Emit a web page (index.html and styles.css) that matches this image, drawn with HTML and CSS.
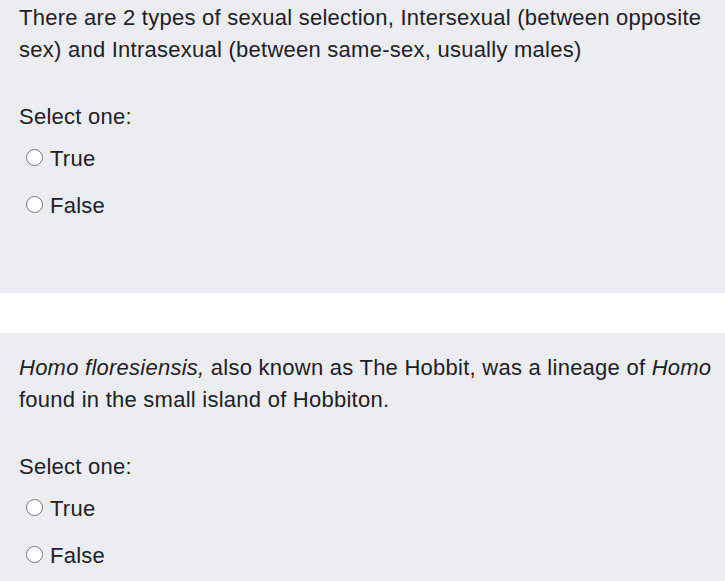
FILE: index.html
```html
<!DOCTYPE html>
<html lang="en">
<head>
<meta charset="utf-8">
<title>Quiz</title>
<link rel="stylesheet" href="styles.css">
</head>
<body>
<div class="question question-first">
  <p class="qtext">There are 2 types of sexual selection, Intersexual (between opposite sex) and Intrasexual (between same-sex, usually males)</p>
  <div class="prompt">Select one:</div>
  <div class="answers">
    <label class="option"><input type="radio" name="q1" class="radio"><span>True</span></label>
    <label class="option"><input type="radio" name="q1" class="radio"><span>False</span></label>
  </div>
</div>
<div class="question">
  <p class="qtext"><em>Homo floresiensis,</em> also known as The Hobbit, was a lineage of <em>Homo</em> found in the small island of Hobbiton.</p>
  <div class="prompt">Select one:</div>
  <div class="answers">
    <label class="option"><input type="radio" name="q2" class="radio"><span>True</span></label>
    <label class="option"><input type="radio" name="q2" class="radio"><span>False</span></label>
  </div>
</div>
</body>
</html>
```
FILE: styles.css
```css
html, body {
  margin: 0;
  padding: 0;
  background: #ffffff;
}
body {
  font-family: "Liberation Sans", Arial, sans-serif;
  font-size: 22px;
  letter-spacing: 0.25px;
  color: #1d2125;
  overflow: hidden;
}
.question {
  background: #ecedf2;
  padding: 19px 8px 64px 19px;
  margin-bottom: 40px;
}
.question-first {
  padding-top: 2px;
}
.qtext {
  margin: 0;
  line-height: 32px;
}
.prompt {
  margin-top: 35px;
  line-height: 32px;
}
.answers {
  margin-top: 2px;
  display: flex;
  flex-direction: column;
}
.option {
  display: flex;
  align-items: center;
  height: 47px;
  padding-left: 7px;
  gap: 7px;
  line-height: 32px;
}
.radio {
  appearance: none;
  -webkit-appearance: none;
  margin: 0;
  width: 17px;
  height: 17px;
  border: 1.5px solid #767676;
  border-radius: 50%;
  background: #ffffff;
  box-sizing: border-box;
  position: relative;
  top: -1px;
}
em {
  font-style: italic;
}
```
